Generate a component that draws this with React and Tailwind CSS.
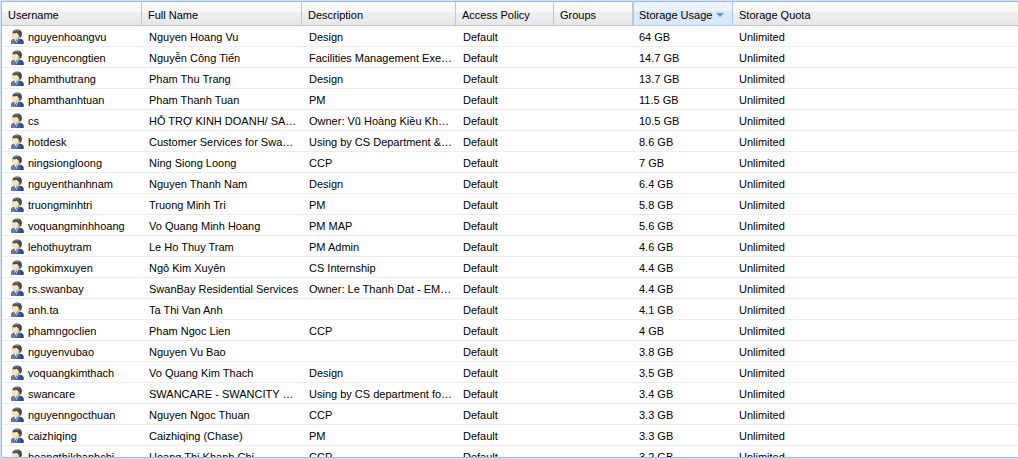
import React from 'react';

const columns = [
  { key: 'username', label: 'Username' },
  { key: 'fullName', label: 'Full Name' },
  { key: 'description', label: 'Description' },
  { key: 'policy', label: 'Access Policy' },
  { key: 'groups', label: 'Groups' },
  { key: 'usage', label: 'Storage Usage', sorted: true },
  { key: 'quota', label: 'Storage Quota' },
];

// username, full name, description, storage usage
const users = [
  ['nguyenhoangvu', 'Nguyen Hoang Vu', 'Design', '64 GB'],
  ['nguyencongtien', 'Nguyễn Công Tiến', 'Facilities Management Executive', '14.7 GB'],
  ['phamthutrang', 'Pham Thu Trang', 'Design', '13.7 GB'],
  ['phamthanhtuan', 'Pham Thanh Tuan', 'PM', '11.5 GB'],
  ['cs', 'HỖ TRỢ KINH DOANH/ SALES', 'Owner: Vũ Hoàng Kiều Khanh', '10.5 GB'],
  ['hotdesk', 'Customer Services for Swancity', 'Using by CS Department & Sales', '8.6 GB'],
  ['ningsiongloong', 'Ning Siong Loong', 'CCP', '7 GB'],
  ['nguyenthanhnam', 'Nguyen Thanh Nam', 'Design', '6.4 GB'],
  ['truongminhtri', 'Truong Minh Tri', 'PM', '5.8 GB'],
  ['voquangminhhoang', 'Vo Quang Minh Hoang', 'PM MAP', '5.6 GB'],
  ['lehothuytram', 'Le Ho Thuy Tram', 'PM Admin', '4.6 GB'],
  ['ngokimxuyen', 'Ngô Kim Xuyên', 'CS Internship', '4.4 GB'],
  ['rs.swanbay', 'SwanBay Residential Services', 'Owner: Le Thanh Dat - EMPLOY', '4.4 GB'],
  ['anh.ta', 'Ta Thi Van Anh', '', '4.1 GB'],
  ['phamngoclien', 'Pham Ngoc Lien', 'CCP', '4 GB'],
  ['nguyenvubao', 'Nguyen Vu Bao', '', '3.8 GB'],
  ['voquangkimthach', 'Vo Quang Kim Thach', 'Design', '3.5 GB'],
  ['swancare', 'SWANCARE - SWANCITY CARE', 'Using by CS department for care', '3.4 GB'],
  ['nguyenngocthuan', 'Nguyen Ngoc Thuan', 'CCP', '3.3 GB'],
  ['caizhiqing', 'Caizhiqing (Chase)', 'PM', '3.3 GB'],
  ['hoangthikhanhchi', 'Hoang Thi Khanh Chi', 'CCP', '3.2 GB'],
];

const App = () => {
  return (
    <div className="h-screen overflow-hidden border-y border-l border-[#d3e3f7] bg-white font-['Liberation_Sans',Arial,sans-serif] text-[11px] leading-[13px] text-black">
      <div className="h-full overflow-hidden border-y border-l border-[#99bce8]">
        <table className="w-full table-fixed border-separate border-spacing-0 text-left">
          <colgroup>
            <col className="w-[140px]" />
            <col className="w-[160px]" />
            <col className="w-[154px]" />
            <col className="w-[98px]" />
            <col className="w-[79px]" />
            <col className="w-[100px]" />
            <col />
          </colgroup>
          <thead>
            <tr>
              {columns.map((col) => (
                <HeaderCell key={col.key} col={col} />
              ))}
            </tr>
          </thead>
          <tbody>
            {users.map(([username, fullName, description, usage]) => (
              <tr key={username}>
                <td className="h-[21px] border-b border-[#ededed] p-0">
                  <div className="flex h-5 items-center gap-1 pt-[2px] pl-2">
                    <UserIcon />
                    <span className="truncate">{username}</span>
                  </div>
                </td>
                <Cell className="pl-[7px]">{fullName}</Cell>
                <Cell className="pl-[7px]">{description}</Cell>
                <Cell className="pl-[7px]">Default</Cell>
                <Cell className="pl-[7px]" />
                <Cell className="pl-[6px]">{usage}</Cell>
                <Cell className="pl-[6px]">Unlimited</Cell>
              </tr>
            ))}
          </tbody>
        </table>
      </div>
    </div>
  );
};

/* Helper Components */
const HeaderCell = ({ col }) => (
  <th
    aria-sort={col.sorted ? 'descending' : undefined}
    className={`h-6 border-b p-0 font-normal ${
      col.sorted
        ? 'border-x border-b-[#aaccf6] border-x-[#aaccf6] bg-[linear-gradient(#ebf3fd_0,#ebf3fd_39%,#d9e8fb_40%,#d9e8fb_100%)]'
        : 'border-r border-[#c5c5c5] bg-[linear-gradient(#f9f9f9_0,#f9f9f9_42%,#eff0f1_43%,#e6e7e9_100%)] last:border-r-0'
    }`}
  >
    <button
      type="button"
      className={`flex h-[23px] w-full items-center gap-1 pt-[3px] text-left ${col.sorted ? 'pl-[5px]' : 'pl-[6px]'}`}
    >
      {col.label}
      {col.sorted && (
        <svg width="8" height="4" viewBox="0 0 8 4" aria-hidden="true">
          <path d="M0 0h8L4 4z" fill="#5f93d6" />
        </svg>
      )}
    </button>
  </th>
);

const Cell = ({ className, children }) => (
  <td className={`h-[21px] truncate border-b border-[#ededed] pt-[2px] pr-[3px] pb-0 ${className}`}>{children}</td>
);

const UserIcon = () => (
  <svg width="14" height="16" viewBox="0 0 14 16" className="shrink-0" aria-hidden="true">
    <path d="M1 15V12.500Q1.300 10 4.500 9.500H9.500Q13 10 13.500 12.500V15Z" fill="#3b62a6" />
    <path d="M1 15V12.500Q1.300 10.800 4 9.800L6 15Z" fill="#6d7c94" />
    <path d="M10.500 10Q13 10.800 13.500 12.500V15H10.500Z" fill="#27498a" />
    <path d="M3.500 9L7.200 14.500L8.500 9Z" fill="#f5f7fb" />
    <path d="M6 10.500h1.200l.8 3-.6 1z" fill="#38507f" />
    <ellipse cx="6.500" cy="6" rx="4.200" ry="4.500" fill="#d9b57b" />
    <ellipse cx="5.500" cy="6.600" rx="2.700" ry="3.300" fill="#fae6bb" />
    <path d="M2.300 4.200Q2.800 .500 7 .500Q12 .500 12 5.300Q11.700 8 10 9L8.800 5.600Q7.500 5 7 3.700Q4.500 4.500 2.300 4.200Z" fill="#454b50" />
    <path d="M4 2.200Q6.500 1 9 2" stroke="#858b8e" fill="none" />
  </svg>
);

export default App;
